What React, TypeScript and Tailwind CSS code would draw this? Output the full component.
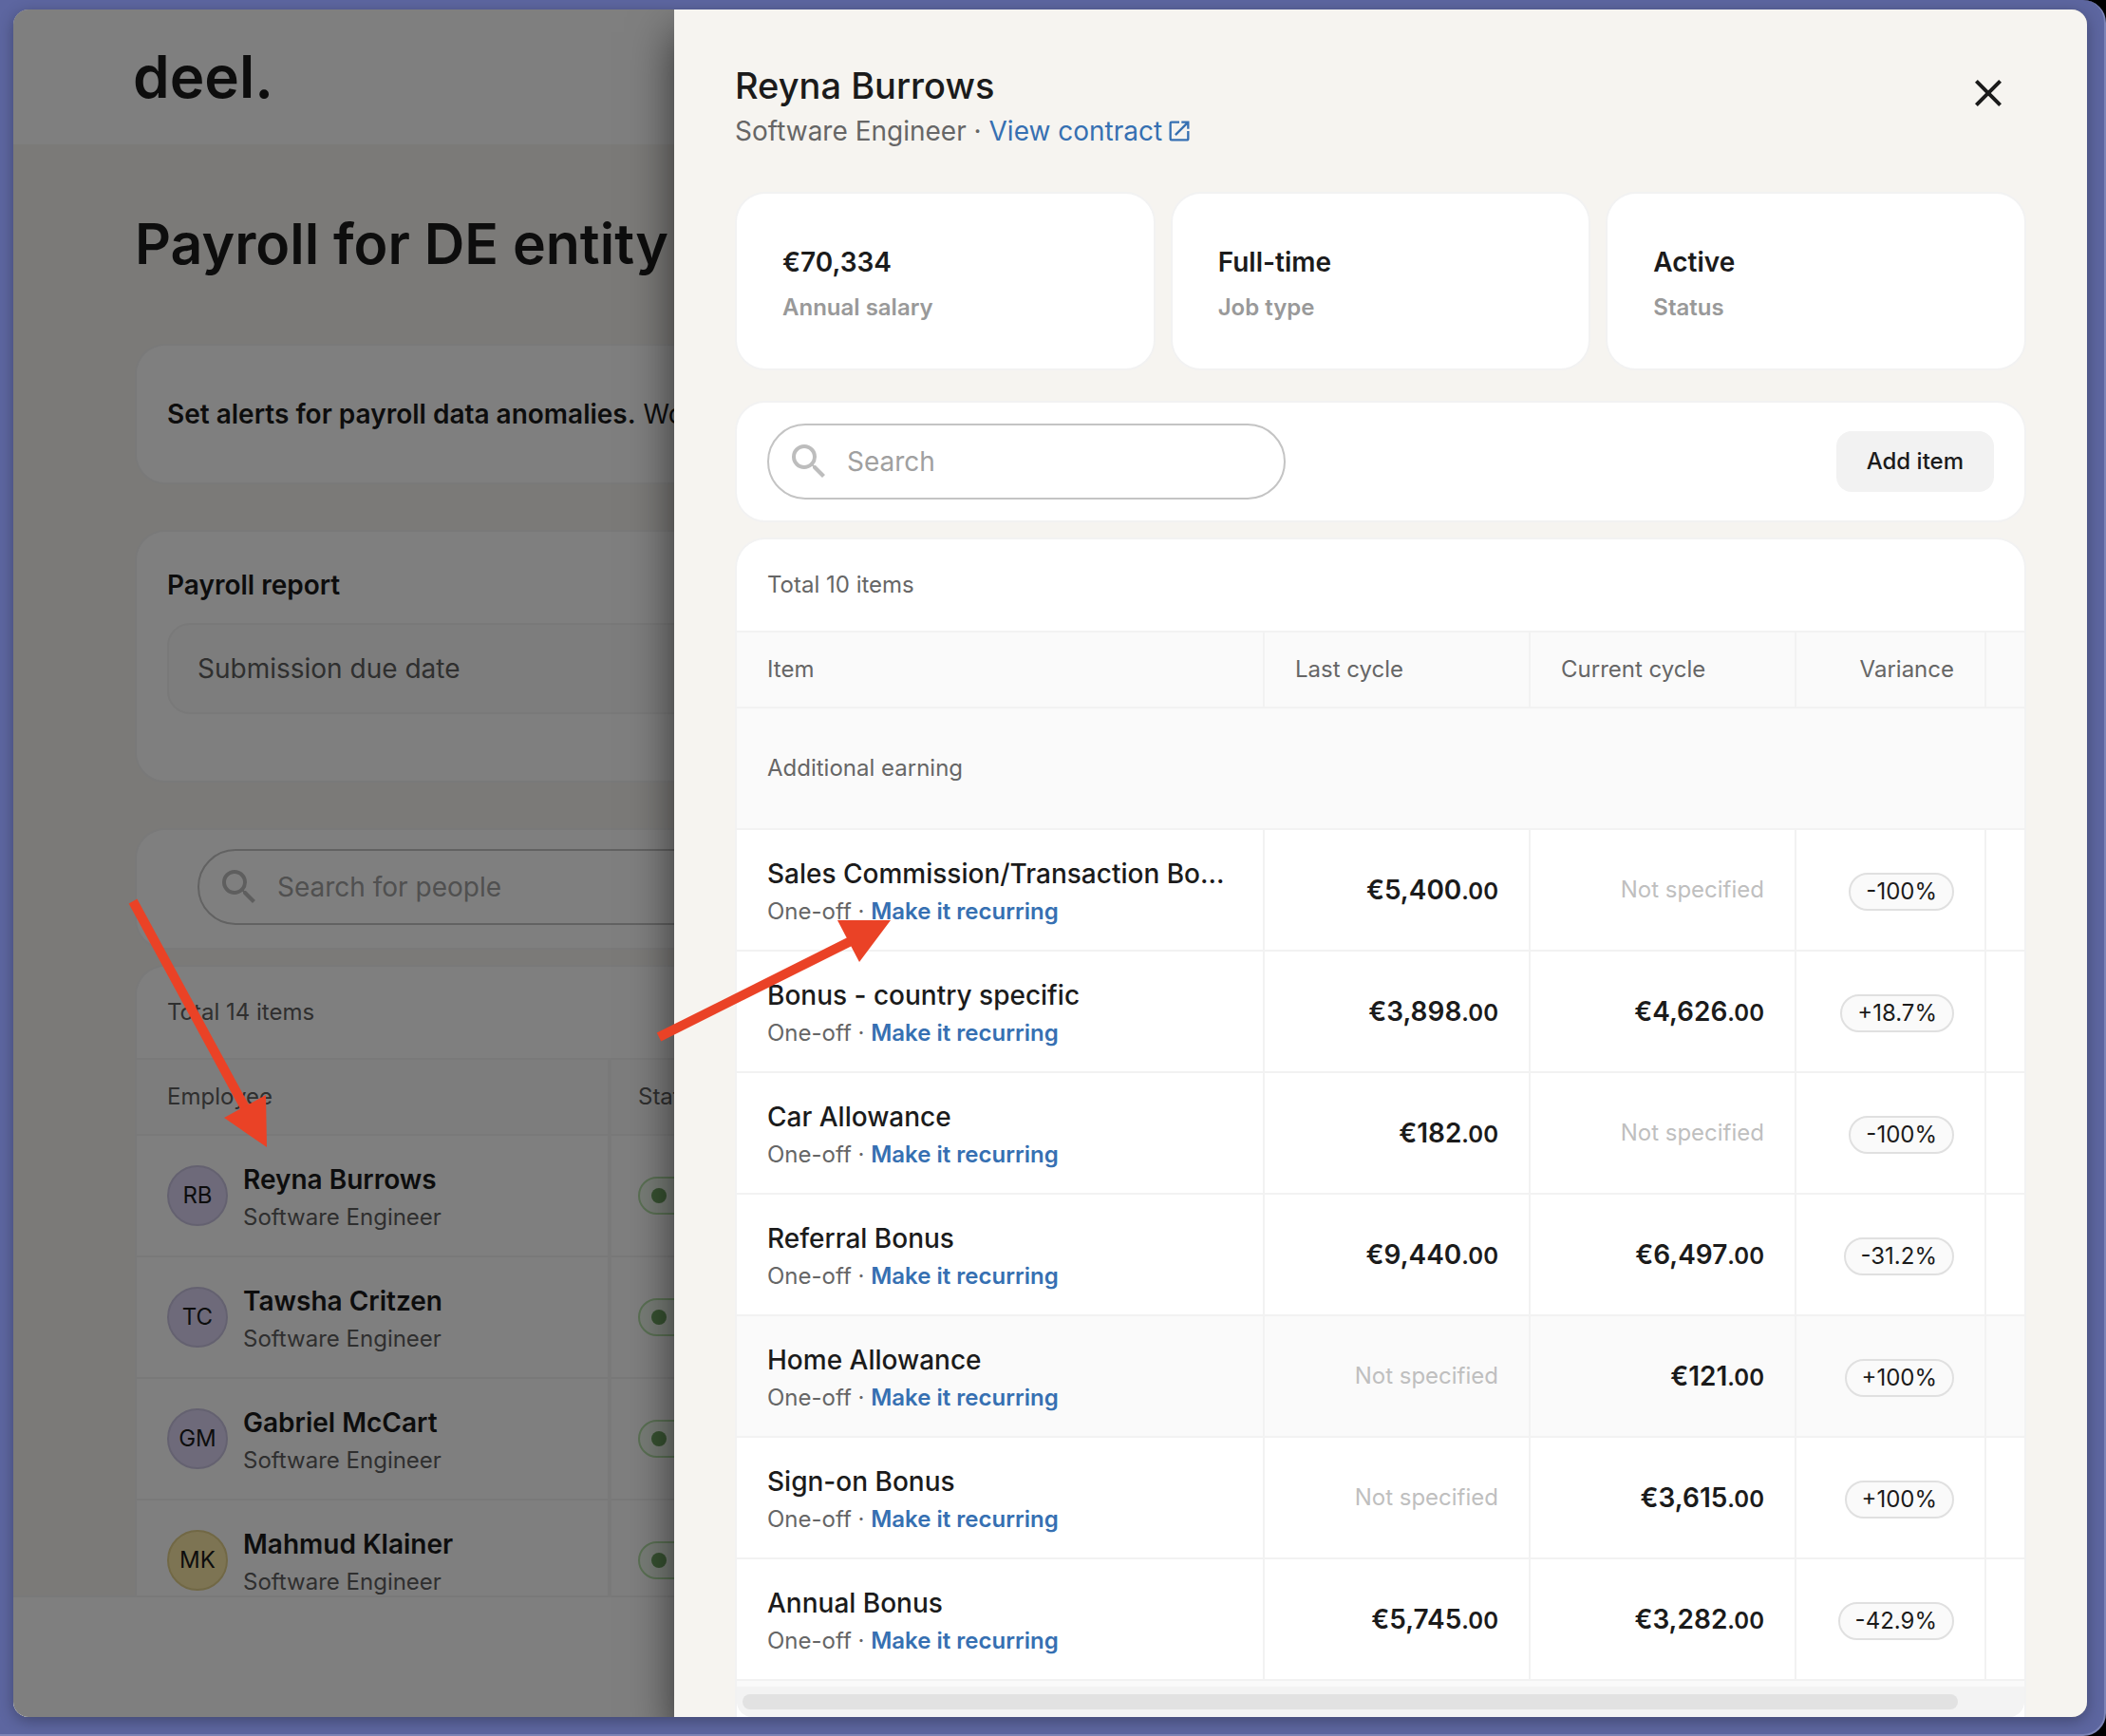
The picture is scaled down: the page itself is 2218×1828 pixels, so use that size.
import { MdClose, MdOpenInNew, MdSearch } from "react-icons/md";

type Employee = {
	initials: string;
	name: string;
	role: string;
	avatar: string;
};

type PayItem = {
	name: string;
	last?: string;
	current?: string;
	variance: string;
	active?: boolean;
};

const lilac = "bg-[#dcd5f5] border-[#c9c3e0]";
const yellow = "bg-[#fbe9a6] border-[#e3d08a]";

const employees: Employee[] = [
	{ initials: "RB", name: "Reyna Burrows", role: "Software Engineer", avatar: lilac },
	{ initials: "TC", name: "Tawsha Critzen", role: "Software Engineer", avatar: lilac },
	{ initials: "GM", name: "Gabriel McCart", role: "Software Engineer", avatar: lilac },
	{ initials: "MK", name: "Mahmud Klainer", role: "Software Engineer", avatar: yellow },
];

const stats = [
	{ value: "€70,334", label: "Annual salary" },
	{ value: "Full-time", label: "Job type" },
	{ value: "Active", label: "Status" },
];

const items: PayItem[] = [
	{ name: "Sales Commission/Transaction Bonus", last: "€5,400", variance: "-100%" },
	{ name: "Bonus - country specific", last: "€3,898", current: "€4,626", variance: "+18.7%" },
	{ name: "Car Allowance", last: "€182", variance: "-100%" },
	{ name: "Referral Bonus", last: "€9,440", current: "€6,497", variance: "-31.2%" },
	{ name: "Home Allowance", current: "€121", variance: "+100%", active: true },
	{ name: "Sign-on Bonus", current: "€3,615", variance: "+100%" },
	{ name: "Annual Bonus", last: "€5,745", current: "€3,282", variance: "-42.9%" },
];

const card = "bg-white border-2 border-[#f2f2f2] rounded-[32px]";

function SearchBox({ id, placeholder, className }: { id: string; placeholder: string; className: string }) {
	return (
		<label
			htmlFor={id}
			className={`flex h-20 items-center gap-4 rounded-full border-2 border-[#c4c4c4] bg-white pl-[18px] pr-8 ${className}`}
		>
			<MdSearch className="size-12 shrink-0 text-[#bdbdbd]" />
			<input
				id={id}
				type="text"
				placeholder={placeholder}
				aria-label={placeholder}
				className="w-full min-w-0 bg-transparent text-[28px] outline-none placeholder:text-[#a0a0a0]"
			/>
		</label>
	);
}

function Amount({ value }: { value?: string }) {
	if (!value) return <span className="text-2xl text-[#bfbfbf]">Not specified</span>;
	return (
		<span className="text-[28px] font-semibold">
			{value}
			<span className="text-2xl font-semibold">.00</span>
		</span>
	);
}

function PayrollPage() {
	return (
		<div className="flex h-full flex-col bg-white">
			<header className="flex h-[142px] shrink-0 items-center pl-[126px]">
				<a href="#" className="text-[62px] leading-[72px] font-semibold">
					deel.
				</a>
			</header>
			<main className="flex min-h-0 flex-1 flex-col overflow-hidden bg-[#f6f4f0] pt-[73px] pl-32">
				<h1 className="shrink-0 text-[59px] leading-[64px] font-semibold whitespace-nowrap">Payroll for DE entity</h1>
				<section className={`${card} mt-[73px] flex h-37 shrink-0 items-center px-8 text-[28px]`}>
					<p className="whitespace-nowrap">
						<strong className="font-semibold">Set alerts for payroll data anomalies.</strong> Would you like to set up alerts?
					</p>
				</section>
				<section className={`${card} mt-12 shrink-0 px-8 pt-9 pb-[70px]`}>
					<h2 className="text-[28px] leading-10 font-semibold">Payroll report</h2>
					<div className="mt-5 flex h-24 items-center rounded-3xl border-2 border-[#f2f2f2] bg-[#fafafa] px-[30px] text-[28px] text-[#5e5e5e]">
						Submission due date
					</div>
				</section>
				<section className={`${card} mt-12 h-32 shrink-0 pt-5 pl-16`}>
					<SearchBox id="people" placeholder="Search for people" className="w-full rounded-r-none" />
				</section>
				<section className={`${card} mt-4 shrink-0 rounded-b-none`}>
					<p className="flex h-24 items-center px-8 text-2xl text-[#5e5e5e]">Total 14 items</p>
					<table className="w-full table-fixed border-separate border-spacing-0 text-left">
						<thead>
							<tr className="h-[82px] bg-[#fafafa] text-2xl text-[#5e5e5e]">
								<th className="w-[500px] border-y-2 border-r-4 border-[#f2f2f2] px-8 font-normal">Employee</th>
								<th className="border-y-2 border-[#f2f2f2] px-7 font-normal">Status</th>
							</tr>
						</thead>
						<tbody>
							{employees.map((e) => (
								<tr key={e.name} className="h-32">
									<td className="border-r-4 border-b-2 border-[#f2f2f2] px-8">
										<div className="flex items-center gap-4">
											<span className={`flex size-16 items-center justify-center rounded-full border-2 text-2xl ${e.avatar}`}>
												{e.initials}
											</span>
											<div className="pt-1.5">
												<div className="text-[28px] leading-10 font-semibold">{e.name}</div>
												<div className="text-2xl leading-10 text-[#5e5e5e]">{e.role}</div>
											</div>
										</div>
									</td>
									<td className="border-b-2 border-[#f2f2f2] px-7">
										<span className="flex h-10 w-32 items-center gap-2 rounded-full border-2 border-[#b5e0a8] bg-[#f1faee] px-3 text-2xl">
											<span className="size-4 shrink-0 rounded-full bg-[#6fa362]" />
											Active
										</span>
									</td>
								</tr>
							))}
						</tbody>
					</table>
				</section>
			</main>
			<footer className="h-32 shrink-0 border-t-2 border-[#f2f2f2] bg-white" />
		</div>
	);
}

function EmployeeDrawer() {
	return (
		<aside className="absolute inset-y-0 right-0 left-[696px] flex flex-col bg-[#f6f4f0] px-16 pt-14 shadow-[0_24px_44px_rgba(0,0,0,0.6)]">
			<div className="flex items-start justify-between">
				<div>
					<h2 className="text-[38px] leading-12 font-medium">Reyna Burrows</h2>
					<p className="flex items-center text-[28px] leading-12 text-[#666]">
						<span className="whitespace-pre">Software Engineer · </span>
						<a href="#" className="flex items-center gap-1 text-[#3670b2]">
							View contract
							<MdOpenInNew className="size-7" />
						</a>
					</p>
				</div>
				<button type="button" aria-label="Close" className="mt-2 mr-4">
					<MdClose className="size-12" />
				</button>
			</div>

			<div className="mt-10 grid grid-cols-3 gap-4">
				{stats.map((s) => (
					<div key={s.label} className={`${card} px-12 pt-12 pb-10`}>
						<div className="text-[28px] leading-12 font-semibold">{s.value}</div>
						<div className="text-2xl leading-12 font-semibold text-[#999]">{s.label}</div>
					</div>
				))}
			</div>

			<div className={`${card} mt-8 flex h-32 shrink-0 items-center justify-between px-8`}>
				<SearchBox id="items" placeholder="Search" className="w-[546px]" />
				<button type="button" className="h-16 rounded-2xl bg-[#f2f2f2] px-8 text-2xl font-medium">
					Add item
				</button>
			</div>

			<div className={`${card} mt-4 flex min-h-0 flex-1 flex-col overflow-hidden rounded-b-none border-b-0`}>
				<p className="flex h-24 shrink-0 items-center px-8 text-2xl text-[#666]">Total 10 items</p>
				<div className="min-h-0 flex-1 overflow-hidden bg-[#fafafa]">
					<table className="w-full table-fixed border-separate border-spacing-0">
						<colgroup>
							<col />
							<col className="w-[280px]" />
							<col className="w-[280px]" />
							<col className="w-[200px]" />
							<col className="w-10" />
						</colgroup>
						<thead>
							<tr className="h-[82px] bg-[#fafafa] text-left text-2xl text-[#666] *:border-y-2 *:border-[#f2f2f2] *:px-8 *:font-normal">
								<th className="border-r-2">Item</th>
								<th className="border-r-2">Last cycle</th>
								<th className="border-r-2">Current cycle</th>
								<th className="border-r-2 text-right">Variance</th>
								<th aria-label="Actions" />
							</tr>
						</thead>
						<tbody>
							<tr className="h-32">
								<td colSpan={5} className="border-b-2 border-[#f2f2f2] bg-[#fafafa] px-8 text-2xl text-[#666]">
									Additional earning
								</td>
							</tr>
							{items.map((item) => (
								<tr
									key={item.name}
									className={`h-32 text-right *:border-b-2 *:border-[#f2f2f2] ${item.active ? "bg-[#fafafa]" : "bg-white"}`}
								>
									<td className="border-r-2 px-8 pt-1.5 text-left">
										<div className="truncate text-[28px] leading-10 font-medium">{item.name}</div>
										<div className="text-2xl leading-10 text-[#666]">
											One-off ·{" "}
											<a href="#" className="font-semibold text-[#3670b2]">
												Make it recurring
											</a>
										</div>
									</td>
									<td className="border-r-2 px-8">
										<Amount value={item.last} />
									</td>
									<td className="border-r-2 px-8">
										<Amount value={item.current} />
									</td>
									<td className="border-r-2 px-8 pt-1">
										<span className="inline-flex h-10 items-center rounded-full border-2 border-[#e0e0e0] bg-[#fafafa] px-4 text-2xl">
											{item.variance}
										</span>
									</td>
									<td />
								</tr>
							))}
						</tbody>
					</table>
				</div>
				<div className="h-8 shrink-0 rounded-b-2xl bg-[#f3f3f3] px-1.5 py-2">
					<div className="h-4 w-20/21 rounded-full bg-[#e2e2e2]" />
				</div>
			</div>
		</aside>
	);
}

// hand-drawn pointers laid over the whole window
function Arrows() {
	return (
		<svg className="pointer-events-none absolute top-0 left-0" width="1000" height="1300" fill="#ea4226" aria-hidden="true">
			<path d="M140 949L260 1170" stroke="#ea4226" strokeWidth="10" />
			<path d="M236 1177L280 1153L281 1208Z" />
			<path d="M694 1092L900 989" stroke="#ea4226" strokeWidth="10" />
			<path d="M882 969H938L905 1013Z" />
		</svg>
	);
}

export default function App() {
	return (
		<div className="relative h-screen bg-black font-[Inter,sans-serif] text-[#1b1b1b]">
			<div className="h-full rounded-r-3xl border-r-2 border-b-2 border-[#7c84b6] bg-[#5d66a0] pt-2.5 pr-[18px] pb-[18px] pl-3.5">
				<div className="relative h-full overflow-hidden rounded-2xl shadow-[0_4px_16px_rgba(0,0,0,0.3)]">
					<PayrollPage />
					<div className="absolute inset-0 bg-black/50" />
					<EmployeeDrawer />
				</div>
			</div>
			<Arrows />
		</div>
	);
}
